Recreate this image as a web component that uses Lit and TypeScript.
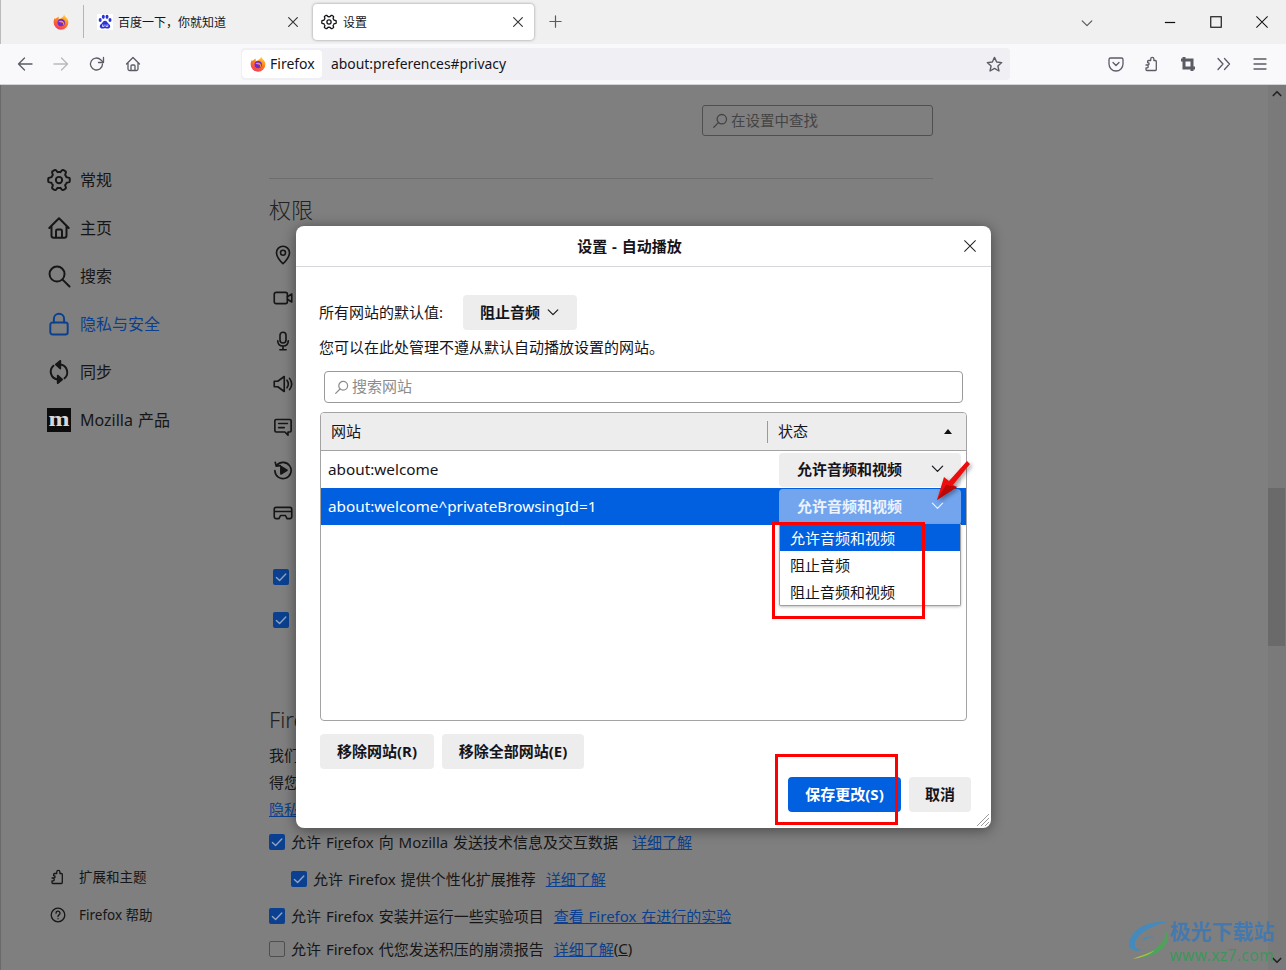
import { LitElement, html, css, svg } from "lit";
import { customElement } from "lit/decorators.js";

const s = (w: number, body: unknown, cls = "", vb = 16) => html`<svg class=${cls} width=${w} height=${w} viewBox="0 0 ${vb} ${vb}" fill="none" stroke="currentColor" stroke-width="1.3" stroke-linecap="round" stroke-linejoin="round">${body}</svg>`;

function gearPath(): string {
  const pts: string[] = [];
  const n = 120;
  for (let i = 0; i < n; i++) {
    const a = (i / n) * Math.PI * 2 - Math.PI / 2;
    const c = Math.cos(a * 6 + Math.PI * 3);
    const k = Math.max(-1, Math.min(1, -c * 2.2));
    const r = 6.25 + k * 0.95;
    pts.push(`${(8 + r * Math.cos(a)).toFixed(2)} ${(8 + r * Math.sin(a)).toFixed(2)}`);
  }
  return "M" + pts.join("L") + "Z";
}
const gearP = svg`<circle cx="8" cy="8" r="2.100"/><path d=${gearPath()}/>`;
const homeP = svg`<path d="M1.500 8 8 1.500 14.500 8M3 6.800V13a1.500 1.500 0 0 0 1.500 1.500h7A1.500 1.500 0 0 0 13 13V6.800M6 14.500V10a1 1 0 0 1 1-1h2a1 1 0 0 1 1 1v4.500"/>`;
const extP = svg`<path d="M2 9h2.200c1.200 0 1.200-2.300 0-2.300H3.600V5.400c0-.5.4-.9.9-.9h2.200V3.200c0-2.400 3.200-2.400 3.200 0v1.300h1.500c.5 0 .9.4.9.9v8.200c0 .5-.4.9-.9.9H2.900a.9.9 0 0 1-.9-.9V11.800h1.300c1.200 0 1.200-2.800-.2-2.800z"/>`;
const chev = svg`<path d="M2.500 5.500 8 11l5.500-5.500"/>`;
const closeP = svg`<path d="M3 3l10 10M13 3 3 13"/>`;
const closeThin = svg`<path d="M3 3l10 10M13 3 3 13" stroke-width=".9" stroke-linecap="butt"/>`;
const check = svg`<path d="M3.400 8.400 6.600 11.400 12.800 5" stroke="#8fa3c4" stroke-width="1.400"/>`;

const fox = (w: number) => html`<svg width=${w} height=${w} viewBox="0 0 16 16">
  <defs>
    <linearGradient id="fx" x1="0.7" y1="0" x2="0.2" y2="1"><stop offset="0" stop-color="#ffd43b"/><stop offset="0.45" stop-color="#ff7a1a"/><stop offset="1" stop-color="#f0336e"/></linearGradient>
  </defs>
  <path fill="url(#fx)" d="M11.200.6c.3 1.500 1.200 2.200 2.200 3.200 1.200 1.300 2 2.800 2 4.500a7.400 7.400 0 0 1-14.800 0c0-1.800.6-3.300 1.400-4.600l.6 1.500C3.500 3.800 4.700 3 6 2.700c-.5 1-.5 1.800 0 2.400 1.800-.6 4.600-1.800 5.200-4.500z"/>
  <circle cx="8.200" cy="8.600" r="3.700" fill="#6e2bd0"/>
  <path fill="#ff9a1f" d="M5.400 7.400c1.600-1 4-.8 5.300.8.800 1.300.2 3-1.300 3.600 1-1 1-2.400 0-3-1-.7-2.600-.6-4 -1.400z"/>
</svg>`;

const baidu = html`<svg width="16" height="16" viewBox="0 0 16 16" fill="#2a32d8">
  <rect width="16" height="16" fill="#fff"/>
  <ellipse cx="3.200" cy="6" rx="1.500" ry="2"/><ellipse cx="6.300" cy="2.800" rx="1.500" ry="2.100"/><ellipse cx="10" cy="2.800" rx="1.500" ry="2.100"/><ellipse cx="13" cy="6" rx="1.500" ry="2"/>
  <path d="M8 6.800c-1.800 0-2.300 2-3.600 2.900C3 10.700 2.400 12 3 13.300c.6 1.300 2.200 1.500 3.400 1.100.9-.2 2.300-.2 3.200 0 1.200.4 2.800.2 3.400-1.100.6-1.300 0-2.600-1.400-3.600C10.300 8.800 9.800 6.800 8 6.800z"/>
  <path d="M5.500 10.500v2h1.600v-2M9 10.500v2h1.800v-2" stroke="#fff" stroke-width=".7" fill="none"/>
</svg>`;

const search = (w: number) => s(w, svg`<circle cx="9.800" cy="6.200" r="4.700"/><path d="M6.400 9.600 1.800 14.200"/>`);

const perms: [string, unknown][] = [
  ["位置", svg`<path d="M8 15S2.800 10 2.800 6.200a5.200 5.200 0 0 1 10.400 0C13.200 10 8 15 8 15z"/><circle cx="8" cy="6.200" r="2"/>`],
  ["摄像头", svg`<rect x="1" y="3.500" width="10.500" height="9" rx="1.500"/><path d="M11.500 7 15 4.800v6.400L11.500 9"/>`],
  ["麦克风", svg`<rect x="5.600" y="1" width="4.800" height="8.600" rx="2.400"/><path d="M3.800 7.800c0 2.800 1.800 4.200 4.200 4.200s4.200-1.400 4.200-4.200M8 12v3M5.500 15h5"/>`],
  ["扬声器", svg`<path d="M1 5.800h2.800L9 2v12l-5.200-3.800H1zM11.200 5c1.300 1.800 1.300 4.200 0 6M13.200 3.500c2.100 2.700 2.100 6.300 0 9"/>`],
  ["通知", svg`<path d="M2.500 2h11a1 1 0 0 1 1 1v8a1 1 0 0 1-1 1H12v2.500L9.500 12h-7a1 1 0 0 1-1-1V3a1 1 0 0 1 1-1zM4.500 5.200h7M4.500 8.500h4.500"/>`],
  ["自动播放", svg`<path d="M3 4.200A6.500 6.500 0 1 1 1.500 8.500M1.800 1.800 2.600 5l3.200-.5"/><path d="M6.300 5.200v6l4.900-3z" fill="currentColor"/>`],
  ["虚拟现实", svg`<path d="M2.500 3.500h11A1.500 1.500 0 0 1 15 5v6a1.500 1.500 0 0 1-1.500 1.500h-2.300L10 10H6l-1.200 2.500H2.500A1.500 1.500 0 0 1 1 11V5a1.500 1.500 0 0 1 1.500-1.500zM1 6.800h14"/>`],
];

const navs: [string, unknown, string][] = [
  ["常规", gearP, ""],
  ["主页", homeP, ""],
  ["搜索", svg`<circle cx="6.700" cy="6.700" r="5"/><path d="M10.400 10.400 15 15"/>`, ""],
  ["隐私与安全", svg`<rect x="2.200" y="7" width="11.600" height="8" rx="1.500"/><path d="M4.600 7V4.600a3.400 3.400 0 0 1 6.800 0V7"/>`, "on"],
  ["同步", svg`<path d="M9 3a5.300 5.300 0 0 1 2.700 9.200M7 13a5.300 5.300 0 0 1-2.700-9.200"/><path d="M8.800.6v5L6 3zM7.200 15.400v-5L10 13z" fill="currentColor"/>`, ""],
];

@customElement("app-root")
export class AppRoot extends LitElement {
  static styles = css`
    :host { display: block; width: 1286px; height: 970px; position: relative; overflow: hidden; font-family: "Noto Sans", "Noto Sans CJK SC", sans-serif; color: #15141a; }
    svg { display: block; flex: none; }
    .tabs { height: 44px; background: #f0f0f0; display: flex; align-items: flex-start; font-size: 12px; box-sizing: border-box; border-left: 1px solid #bbb; padding-right: 1px; }
    .pin { width: 83px; padding-left: 52px; box-sizing: border-box; display: flex; align-items: center; border-right: 1px solid #b5b5b5; height: 33px; margin-top: 5px; }
    .tab { height: 36px; margin-top: 4px; display: flex; align-items: center; box-sizing: border-box; color: #15141a; }
    .tab .x { color: #333; }
    .t1 { width: 229px; padding-left: 13px; gap: 5px; }
    .t1 .lb { width: 163px; }
    .t2 { width: 221px; padding-left: 8px; gap: 6px; background: #fff; border-radius: 4px; box-shadow: 0 0 3px rgba(0,0,0,.4); }
    .t2 .lb { width: 162px; }
    .plus { margin: 14px 0 0 14px; color: #5b5b66; }
    .tabspace { flex: 1; }
    .tabchev { margin: 16px 53px 0 0; color: #555; }
    .winbtn { width: 46px; height: 44px; display: flex; align-items: center; justify-content: center; color: #111; }
    .toolbar { height: 41px; background: #f9f9fb; border-bottom: 1px solid #d4d4d4; box-sizing: border-box; display: flex; align-items: center; padding-left: 17px; color: #5b5b66; }
    .nb { width: 36px; display: flex; }
    .nb.off { color: #b8b8bf; }
    .nb.last { width: 16px; }
    .url { width: 769px; height: 32px; margin-left: 100px; background: #f0f0f4; border-radius: 4px; display: flex; align-items: center; box-sizing: border-box; padding: 0 7px 0 1px; color: #15141a; font-size: 14px; }
    .ident { width: 80px; height: 28px; background: #fff; border-radius: 4px; display: flex; align-items: center; gap: 4px; padding-left: 8px; box-sizing: border-box; }
    .ident span { margin-bottom: 1px; }
    .addr { flex: 1; margin: 0 0 2px 9px; font-size: 13.900px; }
    .star { color: #5b5b66; }
    .tright { display: flex; margin-left: 98px; gap: 20px; }
    .content { height: 885px; background: #7f7f7f; display: flex; color: #161616; border-left: 1px solid #6a6a6a; box-sizing: border-box; }
    .side { width: 268px; flex: none; padding-top: 71px; box-sizing: border-box; display: flex; flex-direction: column; }
    .nav { height: 48px; display: flex; align-items: center; gap: 9px; padding-left: 46px; font-size: 16px; word-spacing: 1px; }
    .nav span, .nav2 span { margin-bottom: 2px; }
    .nav.on { color: #0a408f; }
    .sideb { margin-top: auto; padding-bottom: 36px; }
    .nav2 { height: 38px; display: flex; align-items: center; gap: 13px; padding-left: 49px; font-size: 13.500px; }
    .main { flex: 1; position: relative; }
    .find { width: 231px; height: 31px; margin: 20px 0 0 433px; border: 1px solid #4f4f4f; border-radius: 3px; box-sizing: border-box; display: flex; align-items: center; gap: 3px; padding-left: 9px; font-size: 14.500px; color: #444; }
    .find span { margin-bottom: 2px; }
    .hr { height: 1px; width: 664px; background: #6d6d6d; margin-top: 42px; }
    .h { font-size: 22px; font-weight: 300; line-height: 30px; margin-top: 15px; color: #222; }
    .perm { height: 43px; display: flex; align-items: center; gap: 12px; padding-left: 4px; font-size: 15px; }
    .plist { margin-top: 9px; }
    .plist2 { margin-top: 21px; }
    .permchk { height: 43px; display: flex; align-items: center; gap: 6px; padding-left: 4px; font-size: 15px; }
    .chk { width: 16px; height: 16px; border-radius: 2px; background: #0a408f; flex: none; display: block; }
    .chk.no { background: none; border: 1px solid #4f4f4f; box-sizing: border-box; }
    .fh { margin-top: 63px; }
    .p { font-size: 15px; line-height: 27px; white-space: nowrap; }
    .pp { margin-top: 8px; }
    a { color: #0a408f; text-decoration: underline; }
    .row { display: flex; align-items: center; gap: 6px; font-size: 15px; white-space: nowrap; height: 37px; word-spacing: 1px; }
    .row.in { padding-left: 22px; }
    .row a { margin-left: 4px; }
    .row.first a { margin-left: 8px; }
    .row.tight { height: 29px; }
    .acc { display: flex; }
    .row .acc a { margin-left: 4px; }
    .sb { width: 18px; flex: none; background: #7a7a7a; display: flex; flex-direction: column; align-items: center; color: #222; }
    .sb .up { margin-top: 3px; }
    .thumb { margin-top: 388px; width: 18px; height: 158px; background: #6a6a6a; box-sizing: border-box; border-right: 1px solid #7a7a7a; }
    .sb .dn { margin-top: auto; margin-bottom: 4px; }

    .dlg { position: absolute; left: 296px; top: 226px; width: 695px; height: 602px; background: #fff; border-radius: 8px; box-shadow: 0 2px 14px rgba(0,0,0,.45); display: flex; flex-direction: column; font-size: 15px; color: #15141a; }
    .dt { height: 41px; border-bottom: 1px solid #d7d7db; box-sizing: border-box; display: flex; align-items: center; justify-content: center; font-weight: 700; font-size: 15px; word-spacing: 1px; position: relative; padding: 0 28px 2px 0; }
    .dx { position: absolute; right: 12px; top: 11px; color: #222; }
    .dbody { padding: 28px 24px 0 23px; flex: 1; display: flex; flex-direction: column; }
    .def { display: flex; align-items: center; height: 35px; }
    .def > span { margin-bottom: 2px; }
    .btn { background: #ededed; border-radius: 4px; font-weight: 700; display: flex; align-items: center; justify-content: center; height: 35px; box-sizing: border-box; white-space: nowrap; padding-bottom: 2px; }
    .defb { width: 114px; margin-left: 20px; gap: 6px; }
    .desc { margin-top: 6px; line-height: 22px; white-space: nowrap; }
    .sr { height: 32px; margin: 13px 4px 0 5px; border: 1px solid #9a9a9a; border-radius: 4px; box-sizing: border-box; display: flex; align-items: center; gap: 3px; padding-left: 9px; color: #8c8c8c; }
    .sr span { margin-bottom: 4px; }
    .tb { height: 309px; margin-top: 9px; margin-left: 1px; border: 1px solid #a3a3a3; border-radius: 4px; box-sizing: border-box; position: relative; }
    .th { height: 38px; background: #ededed; border-bottom: 1px solid #a3a3a3; box-sizing: border-box; display: flex; align-items: center; border-radius: 3px 3px 0 0; }
    .th1 { width: 446px; padding-left: 10px; box-sizing: border-box; margin-bottom: 2px; }
    .th2 { flex: 1; border-left: 1px solid #999; height: 22px; padding-left: 10px; display: flex; align-items: center; justify-content: space-between; padding-right: 14px; }
    .th2 span { margin-bottom: 2px; }
    .tri { width: 0; height: 0; border: 4px solid transparent; border-bottom: 5px solid #111; border-top: 0; }
    .tr { height: 37px; display: flex; align-items: center; justify-content: space-between; padding: 0 5px 0 7px; font-size: 15.300px; }
    .tr > span { margin-bottom: 2px; }
    .tr.sel { background: #0060df; color: #fff; }
    .stb { width: 182px; height: 34px; display: flex; align-items: center; font-size: 15px; padding-left: 18px; justify-content: space-between; padding-right: 16px; }
    .sel .stb { background: #72a5ee; color: #ecf3fd; height: 36px; }
    .menu { position: absolute; left: 458px; top: 111px; width: 182px; height: 82px; background: #fff; border: 1px solid #a0a0a0; border-top: 0; border-radius: 0 0 2px 2px; box-sizing: border-box; box-shadow: 0 1px 3px rgba(0,0,0,.25); }
    .mi { height: 27px; display: flex; align-items: center; padding-left: 10px; font-size: 15px; }
    .mi.a { background: #0060df; color: #fff; }
    .rmv { display: flex; gap: 8px; margin-top: 13px; margin-left: 1px; }
    .r1 { width: 114px; }
    .r2 { width: 142px; }
    .foot { display: flex; justify-content: flex-end; gap: 8px; margin: 8px -4px 0 0; }
    .save { width: 113px; background: #0060df; color: #fff; }
    .cancel { width: 62px; }
    .grip { position: absolute; right: 1px; bottom: 1px; }

    .redbox { position: absolute; border: 3px solid #f00; box-sizing: border-box; }
    .rb1 { left: 772px; top: 522px; width: 153px; height: 97px; }
    .rb2 { left: 775px; top: 754px; width: 123px; height: 71px; }
    .arrow { position: absolute; left: 925px; top: 452px; filter: drop-shadow(2px 2px 2px rgba(0,0,0,.35)); }
    .wm { position: absolute; left: 1127px; top: 919px; display: flex; gap: 1px; opacity: .85; }
    .wmt { display: flex; flex-direction: column; margin-top: -1px; }
    .wm1 { font-size: 21px; line-height: 26px; font-weight: 700; color: #3a78b8; white-space: nowrap; }
    .wm2 { font-size: 15.500px; line-height: 18px; margin-top: 2px; color: #2f9c52; white-space: nowrap; letter-spacing: .4px; }
  `;

  render() {
    return html`
      <div class="tabs">
        <div class="pin">${fox(16)}</div>
        <div class="tab t1">${baidu}<span class="lb">百度一下，你就知道</span><span class="x">${s(14, closeP)}</span></div>
        <div class="tab t2">${s(16, gearP)}<span class="lb">设置</span><span class="x">${s(14, closeP)}</span></div>
        <div class="plus">${s(15, svg`<path d="M8 2v12M2 8h12"/>`)}</div>
        <div class="tabspace"></div>
        <div class="tabchev">${s(14, chev)}</div>
        <div class="winbtn">${s(15, svg`<path d="M2 8h11" stroke-linecap="butt"/>`)}</div>
        <div class="winbtn">${s(14, svg`<rect x="2" y="2" width="12" height="12" stroke-linejoin="miter"/>`)}</div>
        <div class="winbtn">${s(18, closeThin)}</div>
      </div>
      <div class="toolbar">
        <span class="nb">${s(16, svg`<path d="M15 8H1.500M7.500 2 1.500 8l6 6"/>`)}</span>
        <span class="nb off">${s(16, svg`<path d="M1 8h13.500M8.500 2l6 6-6 6"/>`)}</span>
        <span class="nb">${s(16, svg`<path d="M13.500 8a6 6 0 1 1-1.800-4.300L14 6"/><path d="M14.500 1.500V6.500H9.500"/>`)}</span>
        <span class="nb last">${s(16, homeP)}</span>
        <div class="url">
          <div class="ident">${fox(16)}<span>Firefox</span></div>
          <span class="addr">about:preferences#privacy</span>
          <span class="star">${s(17, svg`<path d="M8 1.300l2 4.400 4.800.5-3.600 3.200 1 4.700L8 11.700l-4.200 2.400 1-4.700L1.200 6.200 6 5.700z"/>`)}</span>
        </div>
        <div class="tright">
          ${s(16, svg`<path d="M2.500 2h11A1.500 1.500 0 0 1 15 3.500V8a7 7 0 0 1-14 0V3.500A1.500 1.500 0 0 1 2.500 2zM5 6.500l3 3 3-3"/>`)}
          ${s(16, extP)}
          ${s(16, svg`<path d="M4 1v11h11M1 4h11v11" stroke-width="3" stroke-linecap="butt" stroke-linejoin="miter"/>`)}
          ${s(16, svg`<path d="M2 2.500 7 8l-5 5.500M8.500 2.500l5 5.500-5 5.500"/>`)}
          ${s(16, svg`<path d="M2 3h12M2 8h12M2 13h12"/>`)}
        </div>
      </div>
      <div class="content">
        <div class="side">
          ${navs.map(([t, p, c]) => html`<div class="nav ${c}">${s(24, p)}<span>${t}</span></div>`)}
          <div class="nav moz">
            <svg width="24" height="24" viewBox="0 0 24 24"><rect width="24" height="24" fill="#0c0c0c"/><text x="1.500" y="18" textLength="21" lengthAdjust="spacingAndGlyphs" font-family="Liberation Serif" font-weight="700" font-size="20" fill="#d8d8d8">m</text></svg>
            <span>Mozilla 产品</span>
          </div>
          <div class="sideb">
            <div class="nav2">${s(16, extP)}<span>扩展和主题</span></div>
            <div class="nav2">${s(16, svg`<circle cx="8" cy="8" r="6.800"/><path d="M6 6.200a2 2 0 1 1 3 1.700c-.7.400-1 .8-1 1.600M8 11.700v.1"/>`)}<span>Firefox 帮助</span></div>
          </div>
        </div>
        <div class="main">
          <div class="find">${search(16)}<span>在设置中查找</span></div>
          <div class="hr"></div>
          <div class="h">权限</div>
          <div class="plist">
            ${perms.map(([t, p]) => html`<div class="perm">${s(20, p)}<span>${t}</span></div>`)}
          </div>
          <div class="plist2">
            <div class="permchk"><i class="chk">${s(16, check)}</i><span>阻止弹出式窗口</span></div>
            <div class="permchk"><i class="chk">${s(16, check)}</i><span>当网站尝试安装附加组件时警告您</span></div>
          </div>
          <div class="h fh">Firefox 数据收集与使用</div>
          <div class="pp">
            <div class="p">我们力求为您提供选择权，并只收集必要的信息。</div>
            <div class="p">得您同意后，我们才会收集其他信息。</div>
            <div class="p"><a>隐私声明</a></div>
          </div>
          <div>
            <div class="row first"><i class="chk">${s(16, check)}</i><span>允许 Fi<u>r</u>efox 向 Mozilla 发送技术信息及交互数据</span><a>详细了解</a></div>
            <div class="row in"><i class="chk">${s(16, check)}</i><span>允许 Firefox 提供个性化扩展推荐</span><a>详细了解</a></div>
            <div class="row"><i class="chk">${s(16, check)}</i><span>允许 Firefox 安装并运行一些实验项目</span><a>查看 Firefox 在进行的实验</a></div>
            <div class="row tight"><i class="chk no"></i><span>允许 Firefox 代您发送积压的崩溃报告</span><span class="acc"><a>详细了解</a><span>(<u>C</u>)</span></span></div>
          </div>
        </div>
        <div class="sb">
          <span class="up">${s(12, svg`<path d="M3 10l5-5 5 5" stroke-width="2.200"/>`)}</span>
          <div class="thumb"></div>
          <span class="dn">${s(12, svg`<path d="M3 6l5 5 5-5" stroke-width="2.200"/>`)}</span>
        </div>
      </div>

      <div class="dlg">
        <div class="dt">设置 - 自动播放<span class="dx">${s(18, closeThin)}</span></div>
        <div class="dbody">
          <div class="def"><span>所有网站的默认值:</span><div class="btn defb">阻止音频 ${s(14, chev)}</div></div>
          <div class="desc">您可以在此处管理不遵从默认自动播放设置的网站。</div>
          <div class="sr">${search(15)}<span>搜索网站</span></div>
          <div class="tb">
            <div class="th"><div class="th1">网站</div><div class="th2"><span>状态</span><i class="tri"></i></div></div>
            <div class="tr"><span>about:welcome</span><div class="btn stb"><span>允许音频和视频</span>${s(15, chev)}</div></div>
            <div class="tr sel"><span>about:welcome^privateBrowsingId=1</span><div class="btn stb"><span>允许音频和视频</span>${s(15, chev)}</div></div>
            <div class="menu">
              <div class="mi a">允许音频和视频</div>
              <div class="mi">阻止音频</div>
              <div class="mi">阻止音频和视频</div>
            </div>
          </div>
          <div class="rmv"><div class="btn r1">移除网站(R)</div><div class="btn r2">移除全部网站(E)</div></div>
          <div class="foot"><div class="btn save">保存更改(S)</div><div class="btn cancel">取消</div></div>
        </div>
        <svg class="grip" width="14" height="14" viewBox="0 0 14 14" stroke="#9a9a9a" stroke-width="1"><path d="M13 1 1 13M13 5 5 13M13 9l-4 4"/></svg>
      </div>

      <div class="redbox rb1"></div>
      <div class="redbox rb2"></div>
      <svg class="arrow" width="52" height="56" viewBox="0 0 52 56">
        <path d="M12 48 19 25 24 29 42 9 45 12 28 33 32 35Z" fill="#ee0d0d"/>
        <path d="M12 48 21 33 32 35Z" fill="#b80808"/>
      </svg>
      <div class="wm">
        <svg width="42" height="41" viewBox="0 0 42 42" fill="none">
          <path d="M41 3C25 2 8 7 2 22c-3 9 6 13 14 9-6 1-10-2-8-8C12 13 27 6 41 3z" fill="#3a8cc8"/>
          <path d="M39 11c3 12-12 24-33 29 14 1 34-6 35-20 0-4-1-7-2-9z" fill="#46aa56"/>
          <path d="M5 41c8-1 17-4 23-9-6 3-15 6-23 9z" fill="#c8c83a"/>
          <path d="M15 21c4-4 11-4 13-1-4-1-8-1-11 2z" fill="#3a8cc8"/>
        </svg>
        <div class="wmt"><span class="wm1">极光下载站</span><span class="wm2">www.xz7.com</span></div>
      </div>
    `;
  }
}
